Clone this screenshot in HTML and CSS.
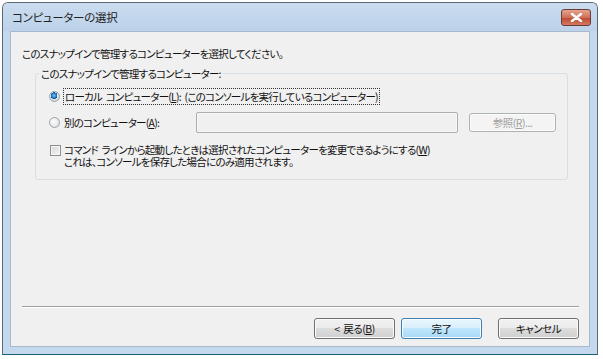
FILE: index.html
```
<html>

<head>
    <title>コンピューターの選択</title>
    <link rel="stylesheet" href="styles.css">
</head>

<body>
    <div class="window">
        <div class="titlebar">
            <span class="title">コンピューターの選択</span>
            <span class="close">
                <svg width="13" height="9" viewBox="0 0 13 9">
                    <path d="M2 1 L11 8 M11 1 L2 8" stroke="#fff" stroke-width="2.4" stroke-linecap="round" />
                </svg>
            </span>
        </div>
        <div class="client">
            <p class="intro">このスナップインで管理するコンピューターを選択してください。</p>
            <fieldset class="group">
                <legend>このスナップインで管理するコンピューター:</legend>
                <div class="row">
                    <span class="radio checked"></span>
                    <span class="label focus">ローカル コンピューター(<u>L</u>): (このコンソールを実行しているコンピューター)</span>
                </div>
                <div class="row">
                    <span class="radio"></span>
                    <span class="label other">別のコンピューター(<u>A</u>):</span>
                    <span class="textbox"></span>
                    <span class="btn disabled browse">参照(<u>R</u>)...</span>
                </div>
                <div class="row check">
                    <span class="checkbox"></span>
                    <span class="label lines">コマンド ラインから起動したときは選択されたコンピューターを変更できるようにする(<u>W</u>)<br>これは、コンソールを保存した場合にのみ適用されます。</span>
                </div>
            </fieldset>
            <div class="fill"></div>
            <div class="sep"></div>
            <div class="buttons">
                <span class="btn">&lt; 戻る(<u>B</u>)</span>
                <span class="btn default">完了</span>
                <span class="btn cancel">キャンセル</span>
            </div>
        </div>
    </div>
</body>

</html>
```

FILE: styles.css
```
:root {
    --frame: #c4d8ee;
    --face: #f0f0f0;
    --text: #111;
    --gray: #8d8d8d;
}

body {
    margin: 0;
    background-color: #fff;
    font-family: "Noto Sans CJK JP", "Noto Sans", sans-serif;
    font-size: 10.5px;
    font-feature-settings: "palt";
    word-spacing: 2px;
    color: var(--text);
}

.window {
    margin: 2px 0 0 2px;
    width: 596px;
    height: 353px;
    box-sizing: border-box;
    border: 1px solid #5c6a78;
    border-bottom-color: #1d5f74;
    border-radius: 6px 6px 0 0;
    background: var(--frame);
    display: flex;
    flex-direction: column;
    padding: 0 7px 7px 7px;
}

.titlebar {
    height: 28px;
    display: flex;
    align-items: center;
    justify-content: space-between;
    background: linear-gradient(#cadcee, #bcd2ea);
    margin: 0 -7px;
    padding: 0 6px 0 9px;
    border-radius: 5px 5px 0 0;
}

.title {
    font-size: 11.5px;
    color: #222;
    letter-spacing: -0.3px;
}

.close {
    width: 28px;
    height: 15px;
    margin-top: 1px;
    border: 1px solid #6d3a3a;
    border-radius: 3px;
    background: linear-gradient(#e3a58f, #cf6f57 50%, #bd4630 51%, #d37a60);
    display: flex;
    align-items: center;
    justify-content: center;
}

.client {
    flex: 1;
    background: var(--face);
    border: 1px solid #a9b9cb;
    display: flex;
    flex-direction: column;
    padding: 0 10px 7px 11px;
}

.intro {
    margin: 14px 0 0 0;
    letter-spacing: -0.75px;
}

.group {
    margin: 5px 11px 0 13px;
    border: 1px solid #d8dfe4;
    border-radius: 3px;
    padding: 2px 0 11px 13px;
    min-width: 0;
}

.group legend {
    padding: 0 2px;
    margin-left: -10px;
    letter-spacing: -0.75px;
}

.row {
    display: flex;
    align-items: center;
    height: 26px;
    letter-spacing: -0.75px;
}

.row.check {
    align-items: flex-start;
    height: auto;
    margin-top: 9px;
}

.radio {
    width: 11px;
    height: 11px;
    border-radius: 50%;
    border: 1px solid #9aa3ab;
    box-sizing: border-box;
    background: radial-gradient(circle at 40% 40%, #fdfdfd, #d8dbde);
    margin-right: 4px;
}

.radio.checked {
    background: radial-gradient(circle at 45% 40%, #7fc8f5 0, #1e78c8 2.4px, #0f4f96 3.2px, #e9ebed 3.4px, #d4d8dc 5px);
}

.checkbox {
    width: 11px;
    height: 11px;
    border: 1px solid #8e8f8f;
    box-sizing: border-box;
    background: linear-gradient(135deg, #d6d8da, #f4f4f4);
    box-shadow: inset 0 0 0 1px #f6f6f6;
    margin: 1px 3px 0 1px;
}

.label.focus {
    outline: 1px dotted #333;
    outline-offset: 0;
    padding: 0 1px;
}

.label.lines {
    line-height: 12px;
}

.label.other {
    width: 132px;
}

.textbox {
    width: 260px;
    height: 19px;
    border: 1px solid #abadb3;
    border-radius: 2px;
    background: #f0f0f0;
    box-shadow: inset 0 0 0 1px #f7f7f7;
}

.btn {
    display: flex;
    align-items: center;
    justify-content: center;
    box-sizing: border-box;
    height: 21px;
    border: 1px solid #707070;
    border-radius: 3px;
    background: linear-gradient(#f2f2f2 0, #ebebeb 45%, #dddddd 50%, #cfcfcf 100%);
    box-shadow: inset 0 0 0 1px #fbfbfb;
    letter-spacing: -0.5px;
}

.btn.disabled {
    color: #a0a0a0;
    border-color: #adb2b5;
    background: #f4f4f4;
}

.browse {
    width: 87px;
    height: 19px;
    margin-left: 11px;
}

.fill {
    flex: 1;
}

.sep {
    border-top: 1px solid #a0a0a0;
    border-bottom: 1px solid #fff;
}

.buttons {
    display: flex;
    justify-content: flex-end;
    gap: 6px;
    margin-top: 10px;
}

.buttons .btn {
    width: 81px;
}

.btn.default {
    border-color: #3c7fb1;
    background: linear-gradient(#eaf6fd 0, #d9f0fc 45%, #bee6fd 50%, #a7d9f5 100%);
    margin-right: 10px;
}
```
